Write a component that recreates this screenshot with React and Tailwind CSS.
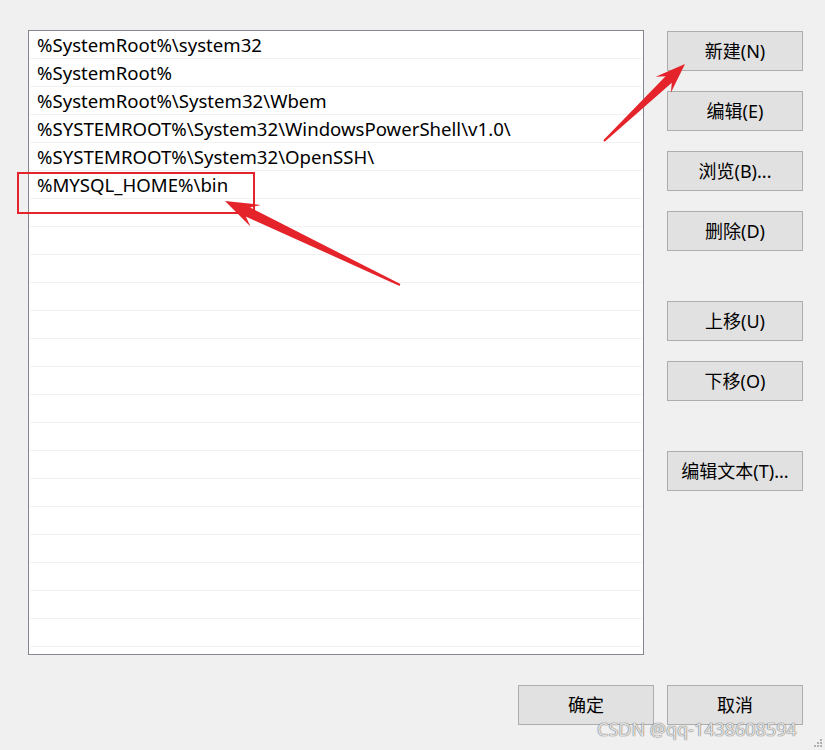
import React from "react";

const paths = [
  "%SystemRoot%\\system32",
  "%SystemRoot%",
  "%SystemRoot%\\System32\\Wbem",
  "%SYSTEMROOT%\\System32\\WindowsPowerShell\\v1.0\\",
  "%SYSTEMROOT%\\System32\\OpenSSH\\",
  "%MYSQL_HOME%\\bin",
];

const font = { fontFamily: '"Noto Sans", "Noto Sans CJK SC", sans-serif' };

// builds a tapered annotation arrow from tail to tip
const arrowPoints = (tail, tip, headLen, headW, shaftW) => {
  const dx = tip[0] - tail[0];
  const dy = tip[1] - tail[1];
  const len = Math.hypot(dx, dy);
  const ux = dx / len;
  const uy = dy / len;
  const nx = -uy;
  const ny = ux;
  const bx = tip[0] - ux * headLen;
  const by = tip[1] - uy * headLen;
  const ix = tip[0] - ux * headLen * 0.75;
  const iy = tip[1] - uy * headLen * 0.75;
  const pts = [
    [tail[0] + nx * 1, tail[1] + ny * 1],
    [ix + nx * shaftW, iy + ny * shaftW],
    [bx + nx * headW, by + ny * headW],
    tip,
    [bx - nx * headW, by - ny * headW],
    [ix - nx * shaftW, iy - ny * shaftW],
    [tail[0] - nx * 1, tail[1] - ny * 1],
  ];
  return pts.map((p) => p.join(",")).join(" ");
};

const Btn = ({ children, className = "" }) => (
  <button
    className={`w-[136px] h-[40px] bg-[#e1e1e1] border border-[#adadad] text-[18px] text-black ${className}`}
    style={font}
  >
    {children}
  </button>
);

const App = () => {
  const rows = Array.from({ length: 22 }, (_, i) => paths[i] || "");

  return (
    <div className="relative w-[825px] h-[750px] bg-[#f0f0f0] overflow-hidden" style={font}>
      <div className="flex pt-[30px] pl-[28px]">
        <div className="w-[616px] h-[625px] bg-white border border-[#828790] px-[1px] overflow-hidden">
          {rows.map((p, i) => (
            <div
              key={i}
              className="h-[28px] border-b border-[#f0f0f0] pl-[7px] text-[18.6px] leading-[28px] text-black whitespace-nowrap"
            >
              {p}
            </div>
          ))}
        </div>

        <div className="flex flex-col ml-[23px] pt-[1px]">
          <Btn>新建(N)</Btn>
          <Btn className="mt-[20px]">编辑(E)</Btn>
          <Btn className="mt-[20px]">浏览(B)...</Btn>
          <Btn className="mt-[20px]">删除(D)</Btn>
          <Btn className="mt-[50px]">上移(U)</Btn>
          <Btn className="mt-[20px]">下移(O)</Btn>
          <Btn className="mt-[50px]">编辑文本(T)...</Btn>
        </div>
      </div>

      <div className="flex justify-end gap-[13px] pr-[22px] mt-[30px]">
        <Btn>确定</Btn>
        <Btn>取消</Btn>
      </div>

      {/* annotation overlay */}
      <div className="absolute left-[17px] top-[172px] w-[238px] h-[42px] border-2 border-[#e5232b]" />
      <svg className="absolute left-0 top-0" width="825" height="750">
        <polygon points={arrowPoints([604, 141], [685, 64], 30, 11, 4.5)} fill="#e5232b" />
        <polygon points={arrowPoints([400, 285], [225, 201], 34, 12, 5)} fill="#e5232b" />
      </svg>

      <div
        className="absolute left-[597px] top-[716px] text-[18px] text-white/80 whitespace-nowrap"
        style={{ ...font, textShadow: "0 0 1px #666, 0 0 1px #666" }}
      >
        CSDN @qq-1438608594
      </div>
      <div className="absolute right-[3px] bottom-[3px] grid grid-cols-3 gap-[1px]">
        {[0, 0, 1, 0, 1, 1, 1, 1, 1].map((v, i) => (
          <div key={i} className={`w-[2px] h-[2px] ${v ? "bg-[#b0b0b0]" : ""}`} />
        ))}
      </div>
    </div>
  );
};

export default App;
